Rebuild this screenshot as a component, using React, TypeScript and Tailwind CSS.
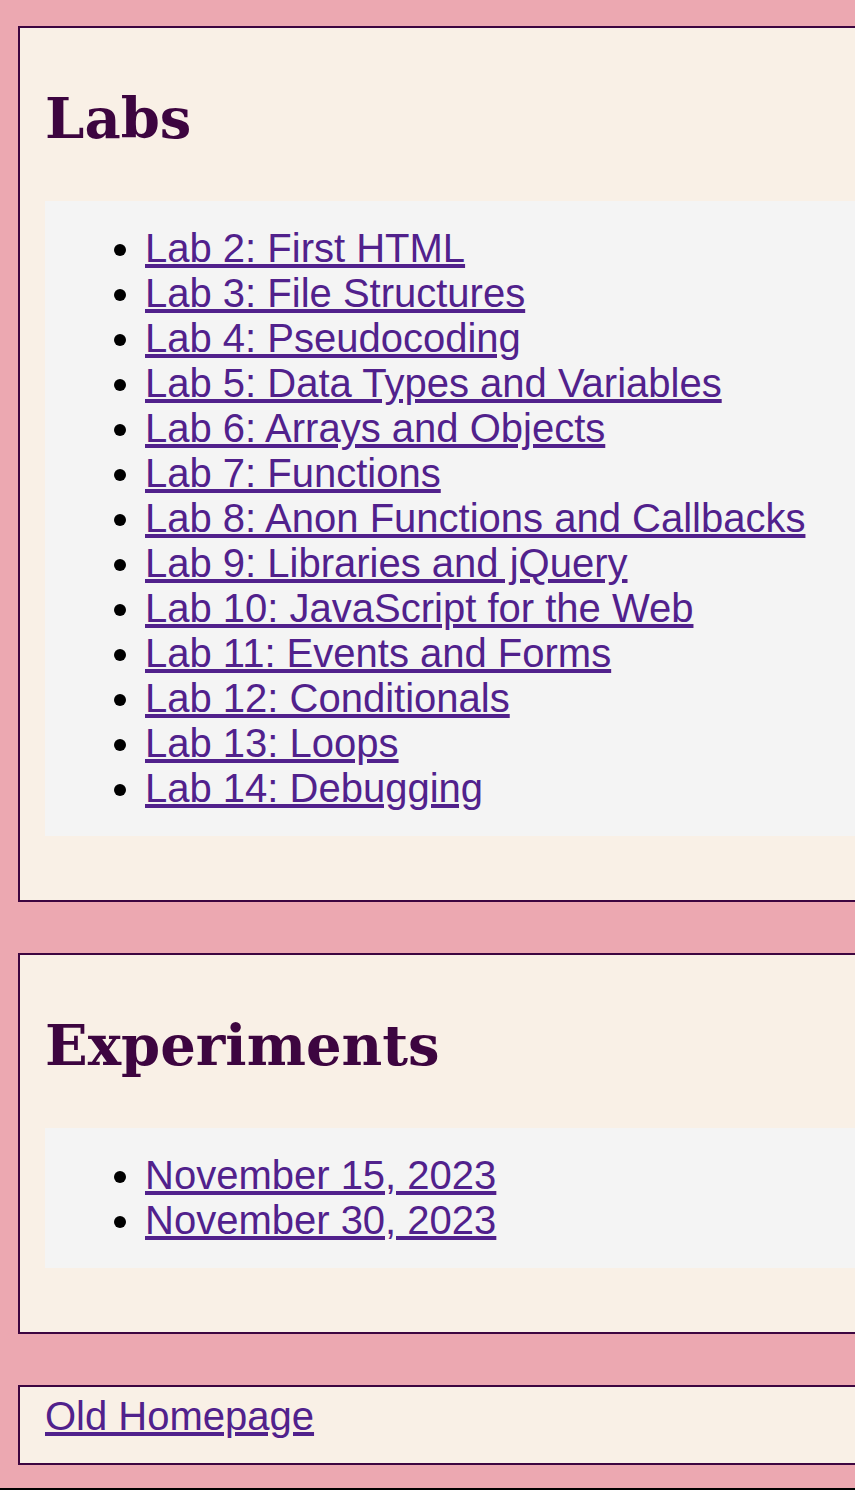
const labs = [
  "Lab 2: First HTML",
  "Lab 3: File Structures",
  "Lab 4: Pseudocoding",
  "Lab 5: Data Types and Variables",
  "Lab 6: Arrays and Objects",
  "Lab 7: Functions",
  "Lab 8: Anon Functions and Callbacks",
  "Lab 9: Libraries and jQuery",
  "Lab 10: JavaScript for the Web",
  "Lab 11: Events and Forms",
  "Lab 12: Conditionals",
  "Lab 13: Loops",
  "Lab 14: Debugging",
];

const experiments = ["November 15, 2023", "November 30, 2023"];

function LinkList({ items }: { items: string[] }) {
  return (
    <ul className="list-disc bg-[#f4f4f4] py-[25px] pl-[100px] font-['Liberation_Sans',Arial,sans-serif] text-[40px] leading-[45px] text-black">
      {items.map((item) => (
        <li key={item}>
          <a href="#" className="whitespace-nowrap text-[#51218c] underline">
            {item}
          </a>
        </li>
      ))}
    </ul>
  );
}

function Section({ title, items }: { title: string; items: string[] }) {
  return (
    <section className="w-[900px] border-2 border-[#3d0540] bg-[#f9f0e6] pb-[64px] pl-[25px]">
      <h2 className="mt-[62px] mb-[55px] font-['DejaVu_Serif',serif] text-[56px] font-bold leading-none text-[#3d0540]">
        {title}
      </h2>
      <LinkList items={items} />
    </section>
  );
}

export default function App() {
  return (
    <div className="min-h-[1490px] overflow-hidden bg-[#eca8b1] pt-[26px]">
      <div className="ml-[18px] flex flex-col gap-[51px]">
        <Section title="Labs" items={labs} />
        <Section title="Experiments" items={experiments} />
        <div className="w-[900px] border-2 border-[#3d0540] bg-[#f9f0e6] pt-[7px] pb-[24px] pl-[25px] font-['Liberation_Sans',Arial,sans-serif] text-[40px] leading-[45px]">
          <a href="#" className="text-[#51218c] underline">
            Old Homepage
          </a>
        </div>
      </div>
      <div className="mt-[23px] h-[2px] bg-black" />
    </div>
  );
}
